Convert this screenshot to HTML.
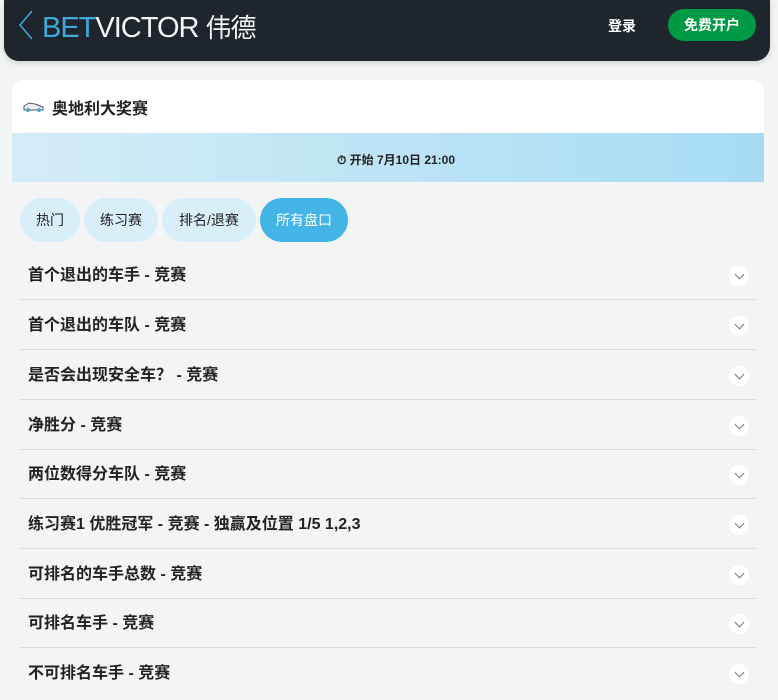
<!DOCTYPE html>
<html><head><meta charset="utf-8"><style>
*{margin:0;padding:0;box-sizing:border-box}
body{width:778px;height:700px;overflow:hidden;background:#f3f4f4;font-family:"Liberation Sans","Noto Sans CJK SC",sans-serif;color:#222;position:relative}
.hdr{position:absolute;left:4px;top:0;width:766px;height:61px;background:#1f252d;border-radius:0 0 15px 15px;box-shadow:0 2px 6px rgba(0,0,0,.15)}
.logo{position:absolute;left:38px;top:8px;font-size:29px;letter-spacing:-1px;color:#f4f4f4;font-weight:normal}
.logo b{color:#3fa9dc;font-weight:normal}
.back{position:absolute;left:14px;top:10px}
.login{position:absolute;left:604px;top:16px;color:#fff;font-weight:bold;font-size:14px}
.reg{position:absolute;left:664px;top:9px;width:88px;height:32px;border-radius:16px;background:#009a44;color:#fff;font-weight:bold;font-size:14px;text-align:center;line-height:32px}
.card{position:absolute;left:12px;top:80px;width:752px;height:53px;background:#fff;border-radius:12px 12px 0 0}
.title{position:absolute;left:52px;top:95px;font-size:16px;font-weight:bold}
.band{position:absolute;left:12px;top:133px;width:752px;height:49px;background:linear-gradient(90deg,#d3ecf7,#a6dcf3);font-size:12px;font-weight:bold;text-align:center;line-height:54px;padding-left:16px}
.tab{position:absolute;top:198px;height:44px;border-radius:22px;background:#d8eef9;font-size:14px;text-align:center;line-height:44px}
.row{position:absolute;left:20px;width:736px;height:50px;border-bottom:1px solid #dcdcdc;font-size:16px;font-weight:bold;padding-left:8px;line-height:52px}
.chev{position:absolute;right:7px;top:16px;width:20px;height:20px;border-radius:50%;background:#fff}
.chev:after{content:"";position:absolute;left:7px;top:5px;width:6px;height:6px;border-right:1.2px solid #777;border-bottom:1.2px solid #777;transform:rotate(45deg)}
</style></head><body>
<div class="hdr">
<svg class="back" width="16" height="30" viewBox="0 0 16 30"><path d="M14 1 L2 15 L14 29" stroke="#3fa9dc" stroke-width="1.5" fill="none"/></svg>
<div class="logo"><b>BET</b>VICTOR <span style="font-size:26px">伟德</span></div>
<div class="login">登录</div>
<div class="reg">免费开户</div>
</div>
<div class="card"></div>
<svg style="position:absolute;left:23px;top:100px" width="21" height="12" viewBox="0 0 21 12"><path d="M1 6 L6 3 L12 4 L20 7 L20 10 L1 10 Z" fill="#eee" stroke="#555" stroke-width="1"/><circle cx="5" cy="10" r="2" fill="#3fa9dc"/><circle cx="16" cy="10" r="2" fill="#3fa9dc"/></svg>
<div class="title">奥地利大奖赛</div>
<div class="band">⏱ 开始 7月10日 21:00</div>
<div class="tab" style="left:20px;width:60px">热门</div>
<div class="tab" style="left:84px;width:74px">练习赛</div>
<div class="tab" style="left:162px;width:94px">排名/退赛</div>
<div class="tab" style="left:260px;width:88px;background:#42b4e6;color:#fff">所有盘口</div>
<div class="row" style="top:250px">首个退出的车手 - 竞赛<div class="chev"></div></div>
<div class="row" style="top:300px">首个退出的车队 - 竞赛<div class="chev"></div></div>
<div class="row" style="top:350px">是否会出现安全车？ - 竞赛<div class="chev"></div></div>
<div class="row" style="top:400px">净胜分 - 竞赛<div class="chev"></div></div>
<div class="row" style="top:449px">两位数得分车队 - 竞赛<div class="chev"></div></div>
<div class="row" style="top:499px">练习赛1 优胜冠军 - 竞赛 - 独赢及位置 1/5 1,2,3<div class="chev"></div></div>
<div class="row" style="top:549px">可排名的车手总数 - 竞赛<div class="chev"></div></div>
<div class="row" style="top:598px">可排名车手 - 竞赛<div class="chev"></div></div>
<div class="row" style="top:648px;border-bottom:none">不可排名车手 - 竞赛<div class="chev"></div></div>
</body></html>
